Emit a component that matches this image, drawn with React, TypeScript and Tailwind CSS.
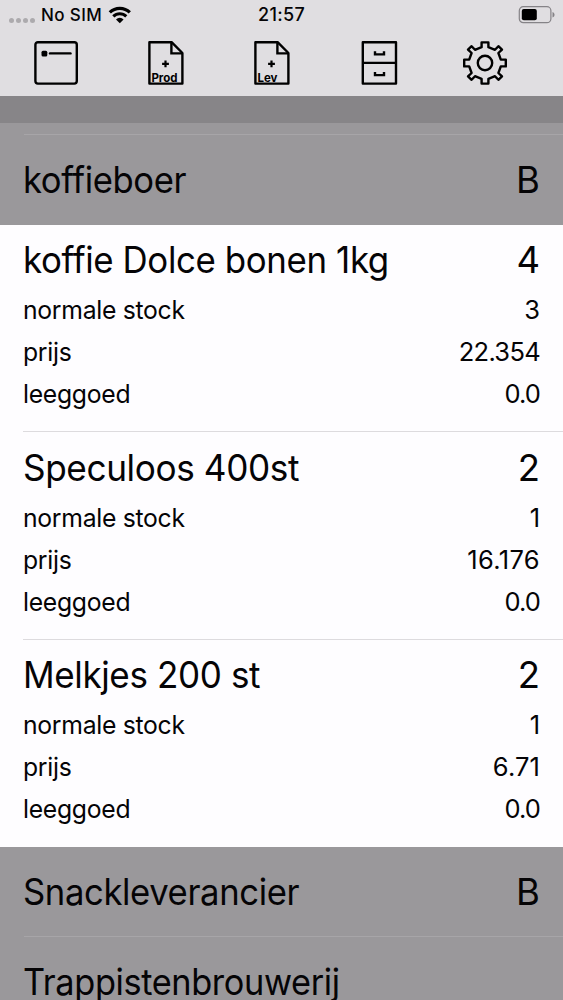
import React from 'react';

interface Product {
  name: string;
  nameClass: string;
  count: string;
  stock: string;
  price: string;
  priceClass: string;
  deposit: string;
}

const products: Product[] = [
  { name: 'koffie Dolce bonen 1kg', nameClass: 'scale-x-[0.955]', count: '4', stock: '3', price: '22.354', priceClass: 'tracking-[-0.7px]', deposit: '0.0' },
  { name: 'Speculoos 400st', nameClass: 'scale-x-[0.964]', count: '2', stock: '1', price: '16.176', priceClass: 'tracking-[0.35px]', deposit: '0.0' },
  { name: 'Melkjes 200 st', nameClass: 'scale-x-[0.96]', count: '2', stock: '1', price: '6.71', priceClass: 'tracking-[0.1px]', deposit: '0.0' },
];

const StatusBar: React.FC = () => (
  <div className="grid h-[31px] grid-cols-[1fr_auto_1fr] items-center pl-[9px] pr-2 text-[17px] font-medium leading-none">
    <div className="flex items-center">
      <div className="mr-[6px] mt-[10px] flex gap-[2px]">
        {[0, 1, 2, 3].map((i) => (
          <span key={i} className="h-[5px] w-[5px] rounded-full bg-[#acaaad]" />
        ))}
      </div>
      <span className="tracking-[0.4px]">No SIM</span>
      <svg width="24" height="18" viewBox="0 0 24 18" className="ml-[6px] -mt-px">
        <path d="M1.8 6.4a14.2 14.2 0 0 1 20 0" fill="none" stroke="#000" strokeWidth="3.2" />
        <path d="M5.3 10.4a9.2 9.2 0 0 1 13 0" fill="none" stroke="#000" strokeWidth="3" />
        <path d="M8 13.4a5.4 5.4 0 0 1 7.6 0L11.8 17.3z" />
      </svg>
    </div>
    <span className="-mt-px mr-px text-[18px] tracking-[0.3px]">21:57</span>
    <svg width="37" height="18" viewBox="0 0 37 18" className="-mt-px justify-self-end">
      <rect x="1.3" y="0.7" width="31.6" height="16" rx="4" fill="none" stroke="#858387" strokeWidth="1.2" />
      <rect x="3.8" y="3.1" width="15" height="11.2" rx="2" />
      <path d="M34.5 6v5.6c1.3-.5 2-1.5 2-2.8s-.7-2.3-2-2.8z" fill="#858387" />
    </svg>
  </div>
);

const WindowIcon: React.FC = () => (
  <svg width="46" height="46" viewBox="0 0 46 46" fill="none" stroke="#000" strokeWidth="2.4">
    <rect x="1.4" y="2.2" width="41.4" height="41.4" rx="2.5" />
    <rect x="7.5" y="10.8" width="5.8" height="5.6" rx="1.5" fill="#000" stroke="none" />
    <path d="M16 13.4h20.5" strokeLinecap="round" />
  </svg>
);

const FileIcon: React.FC<{ label: string }> = ({ label }) => (
  <svg width="46" height="46" viewBox="0 0 46 46" fill="none" stroke="#000" strokeWidth="2.4">
    <path d="M5.4 2.2h22.2l10.8 10.8v30.6h-33z" strokeLinejoin="round" />
    <path d="M27.4 2.2v11.2h11" />
    <path d="M18.1 23.8h6.8M21.5 20.4v6.8" strokeWidth="2.2" />
    <text x="7.4" y="41.8" fill="#000" stroke="none" className="font-['Inter',sans-serif] text-[11.5px] font-bold">
      {label}
    </text>
  </svg>
);

const CabinetIcon: React.FC = () => (
  <svg width="46" height="46" viewBox="0 0 46 46" fill="none" stroke="#000" strokeWidth="2.4">
    <rect x="5.8" y="2.2" width="33.2" height="41.4" strokeLinejoin="round" />
    <path d="M5.8 22.9H39" />
    <path d="M18 11.2v3.2h9v-3.2M18 31.9v3.2h9v-3.2" />
  </svg>
);

const GearIcon: React.FC = () => (
  <svg width="46" height="46" viewBox="-23 -23 46 46" fill="none" stroke="#000" strokeWidth="2.4" strokeLinejoin="round">
    <path d="M-3.4-20.6H3.4V-15.8L10-13.2L13.4-16.8L17-13.4L13.4-10L15.8-3.4H20.8V3.4H15.8L13.4 10L17 13.4L13.4 16.8L10 13.2L3.4 15.8V20.6H-3.4V15.8L-10 13.2L-13.4 16.8L-17 13.4L-13.4 10L-15.8 3.4H-20.8V-3.4H-15.8L-13.4-10L-17-13.4L-13.4-16.8L-10-13.2L-3.4-15.8Z" />
    <circle r="7.2" />
  </svg>
);

const Toolbar: React.FC = () => (
  <div className="flex h-[65px] pl-[5px] pt-[9px]">
    <button className="flex w-[107px] justify-center pr-[3px]"><WindowIcon /></button>
    <button className="flex w-[107px] justify-center pl-[3px]"><FileIcon label="Prod" /></button>
    <button className="flex w-[107px] justify-center pl-px"><FileIcon label="Lev" /></button>
    <button className="flex w-[107px] justify-center"><CabinetIcon /></button>
    <button className="flex w-[107px] justify-center pr-[3px]"><GearIcon /></button>
  </div>
);

const SupplierRow: React.FC<{ name: string; nameClass: string; status?: string }> = ({ name, nameClass, status }) => (
  <div className="flex h-[90px] items-center justify-between bg-[#9a989b] px-[23px] pt-px text-[36.5px] leading-none">
    <span className={`origin-left tracking-[-0.4px] ${nameClass}`}>{name}</span>
    <span>{status}</span>
  </div>
);

const DetailRow: React.FC<{ label: string; value: string; valueClass?: string }> = ({ label, value, valueClass = '' }) => (
  <div className="flex h-[42px] items-center justify-between text-[25.5px] leading-none">
    <span className="origin-left scale-x-[0.97] tracking-[-0.3px]">{label}</span>
    <span className={valueClass}>{value}</span>
  </div>
);

const ProductRow: React.FC<{ product: Product; last: boolean }> = ({ product, last }) => (
  <div className="h-[207.333px] pl-[22.5px]">
    <div className={`h-full pr-[23px] pt-[6px] ${last ? '' : 'border-b border-[#dddbde]'}`}>
      <div className="flex h-[58px] items-center justify-between pt-px text-[36.5px] leading-none">
        <span className={`origin-left tracking-[-0.4px] ${product.nameClass}`}>{product.name}</span>
        <span>{product.count}</span>
      </div>
      <DetailRow label="normale stock" value={product.stock} />
      <DetailRow label="prijs" value={product.price} valueClass={product.priceClass} />
      <DetailRow label="leeggoed" value={product.deposit} valueClass="tracking-[-0.9px]" />
    </div>
  </div>
);

export default function App() {
  return (
    <div className="h-[1000px] w-[563px] overflow-hidden whitespace-nowrap bg-[#fefdff] font-['Inter',sans-serif] text-[#050406]">
      <header className="bg-[#e0dee1]">
        <StatusBar />
        <Toolbar />
      </header>
      <div className="h-[27px] bg-[#878588]" />
      <div className="h-3 bg-[#9a989b] pl-6 pt-[11px]">
        <div className="h-px bg-[#a7a5a8]" />
      </div>
      <SupplierRow name="koffieboer" nameClass="scale-x-[0.948]" status="B" />
      {products.map((product, i) => (
        <ProductRow key={product.name} product={product} last={i === products.length - 1} />
      ))}
      <SupplierRow name="Snackleverancier" nameClass="scale-x-[0.949]" status="B" />
      <div className="bg-[#9a989b] pl-6">
        <div className="-mt-px h-px bg-[#a7a5a8]" />
      </div>
      <SupplierRow name="Trappistenbrouwerij" nameClass="scale-x-[0.94]" />
    </div>
  );
}
